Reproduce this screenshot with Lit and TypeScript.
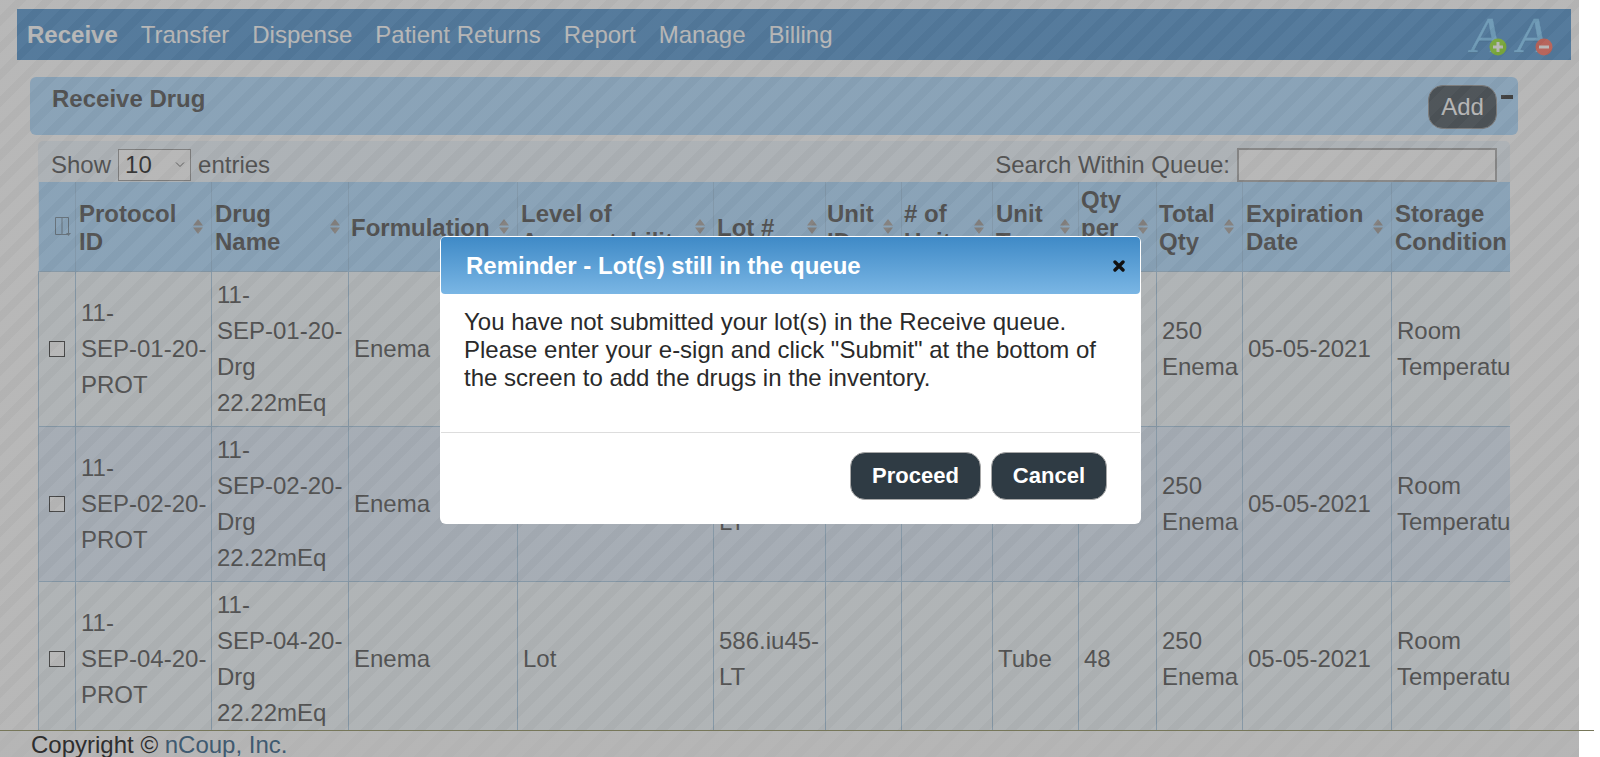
import { LitElement, html, css, svg } from "lit";
import { customElement } from "lit/decorators.js";

interface Col { label: string; w: number; hp: number; sort: boolean; nowrap?: boolean; }
const COLS: Col[] = [
  { label: "Protocol ID", w: 136, hp: 3, sort: true },
  { label: "Drug Name", w: 137, hp: 3, sort: true },
  { label: "Formulation", w: 169, hp: 2, sort: true, nowrap: true },
  { label: "Level of Accountability", w: 196, hp: 3, sort: true },
  { label: "Lot #", w: 112, hp: 3, sort: true },
  { label: "Unit ID", w: 76, hp: 1, sort: true },
  { label: "# of Units", w: 91, hp: 2, sort: true },
  { label: "Unit Type", w: 86, hp: 3, sort: true },
  { label: "Qty per Unit", w: 78, hp: 2, sort: true },
  { label: "Total Qty", w: 86, hp: 2, sort: true },
  { label: "Expiration Date", w: 149, hp: 3, sort: true },
  { label: "Storage Condition", w: 146, hp: 3, sort: false },
];
const ROWS = ["01", "02", "04"].map((n) => [
  `11-\nSEP-${n}-20-\nPROT`,
  `11-\nSEP-${n}-20-\nDrg\n22.22mEq`,
  "Enema",
  "Lot",
  "586.iu45-\nLT",
  "",
  "",
  "Tube",
  "48",
  "250\nEnema",
  "05-05-2021",
  "Room\nTemperature",
]);
const NAV = ["Transfer", "Dispense", "Patient Returns", "Report", "Manage", "Billing"];

const sortIcon = html`<svg class="sort" width="10" height="15" viewBox="0 0 10 15">
  <path d="M5 0 L10 6.5 H0 Z M5 15 L10 8.5 H0 Z" fill="#9a9490" />
</svg>`;

const fontIcon = (color: string, mark: unknown) => html`<svg class="font-icon" width="52" height="44" viewBox="0 0 52 44">
  <text x="3" y="40" class="a-shadow">A</text>
  <text x="3" y="39" class="a-main">A</text>
  <circle cx="30" cy="34" r="8.5" fill="${color}" />
  ${mark}
</svg>`;

@customElement("app-root")
export class AppRoot extends LitElement {
  static styles = css`
    :host {
      display: block;
      position: relative;
      width: 1600px;
      height: 757px;
      overflow: hidden;
      background: #fff;
      font-family: "Liberation Sans", Arial, sans-serif;
      font-size: 24px;
      color: #3a3a3a;
    }
    .page { display: flex; flex-direction: column; height: 757px; }
    .main { flex: 1; min-height: 0; overflow: hidden; padding: 9px 0 0 17px; }
    .nav {
      display: flex;
      align-items: center;
      gap: 23px;
      width: 1554px;
      height: 51px;
      box-sizing: border-box;
      padding: 1px 0 0 10px;
      background: #3a85c8;
      color: #fff;
    }
    .nav .active { font-weight: 700; }
    .icons { margin-left: auto; display: flex; margin-right: 5px; }
    .font-icon { display: block; margin-left: -6px; overflow: visible; }
    .font-icon text { font-family: "Liberation Serif", serif; font-style: italic; font-size: 50px; }
    .a-main { fill: #72c8ff; stroke: #72c8ff; stroke-width: 0.4; }
    .a-shadow { fill: #2a6ca6; }
    .panel {
      display: flex;
      justify-content: space-between;
      width: 1488px;
      height: 58px;
      box-sizing: border-box;
      margin: 17px 0 0 13px;
      padding: 8px 5px 0 22px;
      background: #a4d6ff;
      border-radius: 6px;
    }
    .panel h2 { margin: 0; font-size: 24px; font-weight: 700; line-height: 28px; }
    .panel-actions { display: flex; align-items: flex-start; gap: 4px; }
    .add {
      width: 69px;
      height: 44px;
      box-sizing: border-box;
      border: 1px solid #8a8a8a;
      border-radius: 15px;
      background: #2f3b44;
      color: #fff;
      font: 24px "Liberation Sans", Arial, sans-serif;
      padding: 0;
    }
    .collapse { width: 12px; height: 4px; margin-top: 10px; background: #1c1c1c; }
    .wrap {
      width: 1472px;
      margin: 6px 0 0 21px;
      background: #eaf4fc;
      border-radius: 5px 5px 0 0;
      overflow: hidden;
    }
    .controls {
      display: flex;
      justify-content: space-between;
      align-items: flex-start;
      height: 41px;
      box-sizing: border-box;
      padding: 7px 13px 0 13px;
    }
    .controls label { display: flex; align-items: center; gap: 7px; height: 33px; }
    .select { position: relative; display: block; width: 73px; height: 32px; }
    .select svg { position: absolute; right: 6px; top: 13px; pointer-events: none; }
    select {
      appearance: none;
      display: block;
      width: 73px;
      height: 32px;
      box-sizing: border-box;
      padding: 0 0 0 6px;
      font: 24px "Liberation Sans", Arial, sans-serif;
      color: #000;
      background: #fff;
      border: 1px solid #8e8e8e;
      border-radius: 0;
    }
    input.search {
      width: 260px;
      height: 34px;
      box-sizing: border-box;
      background: #fff;
      border: 2px solid #a0a0a0;
      padding: 0;
    }
    table { border-collapse: collapse; table-layout: fixed; width: 1472px; }
    th {
      position: relative;
      height: 89px;
      padding: 3px 20px 0 0;
      text-align: left;
      font-weight: 700;
      line-height: 28px;
      background: #a4d6ff;
      border-right: 1px solid #94c0e4;
      box-sizing: border-box;
    }
    th.nowrap { white-space: nowrap; padding-right: 0; }
    th.last { padding-right: 0; border-right: 0; }
    .sort { position: absolute; right: 8px; top: 37px; }
    .sel { position: relative; }
    .sel svg { position: absolute; left: 16px; top: 35px; }
    td {
      height: 155px;
      box-sizing: border-box;
      padding: 0 5px;
      line-height: 36px;
      border: 1px solid #9cc0dc;
      white-space: pre;
      overflow: hidden;
    }
    td.last { padding-right: 0; }
    td:first-child { padding: 0; text-align: center; }
    tbody tr:nth-child(odd) td { background: #f0f8fc; }
    tbody tr:nth-child(even) td { background: #dceafa; }
    .check {
      appearance: none;
      display: block;
      margin: 0 0 0 10px;
      width: 16px;
      height: 16px;
      box-sizing: border-box;
      background: #fff;
      border: 1px solid #222;
    }
    .footer {
      position: relative;
      z-index: 6;
      width: 1594px;
      height: 27px;
      box-sizing: border-box;
      flex: none;
      padding-left: 31px;
      border-top: 1px solid #77775a;
      line-height: 28px;
      color: #2e2e2e;
      background: linear-gradient(#b4b4b480, #b4b4b480) no-repeat 0 0 / 1579px 100%;
    }
    .footer a { color: #3f5a70; text-decoration: none; }
    .overlay {
      position: absolute;
      z-index: 5;
      left: 0;
      top: 0;
      width: 1579px;
      height: 757px;
      background: repeating-linear-gradient(
        135deg,
        rgba(113, 113, 113, 0.5) 0 11px,
        rgba(103, 103, 103, 0.5) 11px 19px
      );
    }
    .modal {
      position: absolute;
      z-index: 6;
      left: 440px;
      top: 236px;
      width: 701px;
      height: 288px;
      box-sizing: border-box;
      padding: 1px;
      background: #fff;
      border-radius: 6px;
      color: #2a2a2a;
    }
    .modal-head {
      display: flex;
      align-items: center;
      justify-content: space-between;
      height: 57px;
      box-sizing: border-box;
      padding: 0 15px 0 25px;
      border-radius: 4px;
      background: linear-gradient(#3f8ac7, #7ab6e4);
      color: #fff;
      font-weight: 700;
    }
    .modal-body { height: 138px; box-sizing: border-box; padding: 14px 24px 0 23px; line-height: 28px; }
    .modal-foot {
      display: flex;
      justify-content: flex-end;
      gap: 10px;
      padding: 19px 33px 0 0;
      border-top: 1px solid #ddd;
    }
    .modal-foot button {
      height: 48px;
      box-sizing: border-box;
      padding: 0 21px;
      border: 1px solid #a8a8a8;
      border-radius: 15px;
      background: #2f3b44;
      color: #fff;
      font: 700 22px "Liberation Sans", Arial, sans-serif;
    }
  `;

  render() {
    return html`
      <div class="page">
        <div class="main">
          <nav class="nav">
            <span class="active">Receive</span>
            ${NAV.map((n) => html`<span>${n}</span>`)}
            <div class="icons">
              ${fontIcon("#86e00e", svg`<path d="M30 29v10M25 34h10" stroke="#fff" stroke-width="3" />`)}
              ${fontIcon("#ff5a48", svg`<path d="M25 34h10" stroke="#fff" stroke-width="3" />`)}
            </div>
          </nav>
          <section class="panel">
            <h2>Receive Drug</h2>
            <div class="panel-actions">
              <button class="add">Add</button>
              <div class="collapse"></div>
            </div>
          </section>
          <div class="wrap">
            <div class="controls">
              <label>Show
                <span class="select">
                  <select><option>10</option></select>
                  <svg width="10" height="6" viewBox="0 0 10 6" fill="none" stroke="#555" stroke-width="1">
                    <path d="M1 .5l4 4 4-4" />
                  </svg>
                </span>
                entries</label>
              <label>Search Within Queue: <input class="search" /></label>
            </div>
            <table>
              <colgroup>
                <col style="width:37px" />
                ${COLS.map((c) => html`<col style="width:${c.w}px" />`)}
              </colgroup>
              <thead>
                <tr>
                  <th class="sel">
                    <svg width="16" height="20" viewBox="0 0 16 20" fill="none" stroke="#5f7688">
                      <path d="M.5.5h13v17h-13zM7 .5v17" />
                      <path d="M11 16h5l-2.5 3z" fill="#5f7688" stroke="none" />
                    </svg>
                  </th>
                  ${COLS.map(
                    (c, i) => html`<th
                      class="${c.nowrap ? "nowrap" : ""} ${i === COLS.length - 1 ? "last" : ""}"
                      style="padding-left:${c.hp}px"
                    >${c.label}${c.sort ? sortIcon : ""}</th>`
                  )}
                </tr>
              </thead>
              <tbody>
                ${ROWS.map(
                  (r) => html`<tr>
                    <td><input class="check" type="checkbox" /></td>
                    ${r.map((v, i) => html`<td class="${i === r.length - 1 ? "last" : ""}">${v}</td>`)}
                  </tr>`
                )}
              </tbody>
            </table>
          </div>
        </div>
        <footer class="footer">Copyright © <a href="#">nCoup, Inc.</a></footer>
      </div>
      <div class="overlay"></div>
      <div class="modal" role="dialog">
        <div class="modal-head">
          <span>Reminder - Lot(s) still in the queue</span>
          <svg width="12" height="12" viewBox="0 0 12 12">
            <path d="M2 2l8 8M10 2l-8 8" stroke="#111" stroke-width="3.4" stroke-linecap="round" />
          </svg>
        </div>
        <div class="modal-body">
          You have not submitted your lot(s) in the Receive queue.<br />
          Please enter your e-sign and click "Submit" at the bottom of<br />
          the screen to add the drugs in the inventory.
        </div>
        <div class="modal-foot">
          <button>Proceed</button>
          <button>Cancel</button>
        </div>
      </div>
    `;
  }
}
